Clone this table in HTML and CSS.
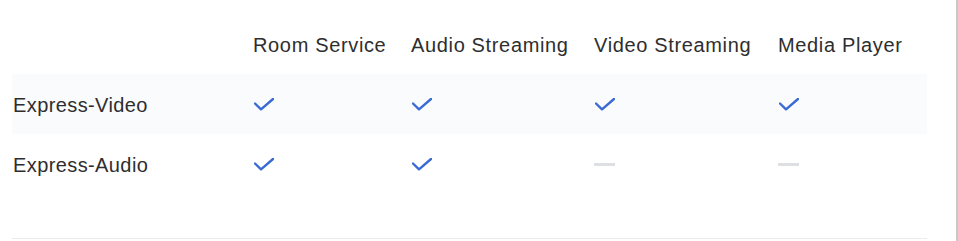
FILE: index.html
```html
<!DOCTYPE html>
<html>
<head>
<meta charset="utf-8">
<link rel="stylesheet" href="styles.css">
</head>
<body>
<div class="page">
  <div class="table">
    <div class="row head">
      <div class="cell first"></div>
      <div class="cell">Room Service</div>
      <div class="cell">Audio Streaming</div>
      <div class="cell">Video Streaming</div>
      <div class="cell">Media Player</div>
    </div>
    <div class="row body alt">
      <div class="cell first">Express-Video</div>
      <div class="cell"><svg class="check" viewBox="0 0 20 13"><path d="M1 5.5 L7 11.3 L19 1"/></svg></div>
      <div class="cell"><svg class="check" viewBox="0 0 20 13"><path d="M1 5.5 L7 11.3 L19 1"/></svg></div>
      <div class="cell"><svg class="check" viewBox="0 0 20 13"><path d="M1 5.5 L7 11.3 L19 1"/></svg></div>
      <div class="cell"><svg class="check" viewBox="0 0 20 13"><path d="M1 5.5 L7 11.3 L19 1"/></svg></div>
    </div>
    <div class="row body">
      <div class="cell first">Express-Audio</div>
      <div class="cell"><svg class="check" viewBox="0 0 20 13"><path d="M1 5.5 L7 11.3 L19 1"/></svg></div>
      <div class="cell"><svg class="check" viewBox="0 0 20 13"><path d="M1 5.5 L7 11.3 L19 1"/></svg></div>
      <div class="cell"><span class="dash"></span></div>
      <div class="cell"><span class="dash"></span></div>
    </div>
    <div class="spacer"></div>
  </div>
</div>
</body>
</html>
```

FILE: styles.css
```css
html, body {
  margin: 0;
  padding: 0;
  background: #ffffff;
}
.page {
  width: 958px;
  height: 241px;
  box-sizing: border-box;
  border-right: 2px solid #c9c9c9;
  padding: 35px 0 0 12px;
  font-family: "Liberation Sans", Arial, sans-serif;
  color: #2e2e2e;
}
.table {
  width: 915px;
}
.row {
  display: grid;
  grid-template-columns: 229px 158px 183px 184px 161px;
}
.head {
  height: 39px;
  font-size: 20px;
  letter-spacing: 0.65px;
  line-height: 21px;
}
.head .cell {
  align-items: flex-start;
}
.body {
  height: 60px;
  font-size: 20px;
  line-height: 20px;
  letter-spacing: 0.4px;
}
.alt {
  background: #fafbfd;
}
.cell {
  display: flex;
  align-items: center;
  padding-left: 12px;
  white-space: nowrap;
}
.cell.first {
  padding-left: 1px;
}
.body .cell.first {
  padding-top: 2px;
}
.check {
  width: 20px;
  height: 13px;
  margin-left: 1px;
  margin-top: 1px;
  fill: none;
  stroke: #3a6ad6;
  stroke-width: 2.4;
  stroke-linecap: round;
  stroke-linejoin: round;
}
.dash {
  display: block;
  width: 21px;
  height: 3px;
  margin-top: 1px;
  background: #dedfe2;
}
.spacer {
  height: 44px;
  border-bottom: 1px solid #ececec;
}
```
